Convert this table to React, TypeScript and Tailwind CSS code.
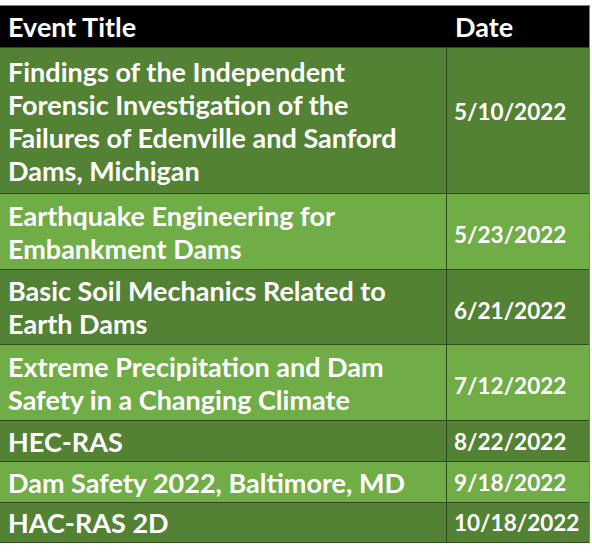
import React from 'react';

interface EventRow {
  title: string[];
  date: string;
  h: string;
  light: boolean;
  dateClass?: string;
}

const rows: EventRow[] = [
  {
    title: [
      'Findings of the Independent',
      'Forensic Investigation of the',
      'Failures of Edenville and Sanford',
      'Dams, Michigan',
    ],
    date: '5/10/2022',
    h: 'h-[146px]',
    light: false,
    dateClass: 'pb-[18px]',
  },
  { title: ['Earthquake Engineering for', 'Embankment Dams'], date: '5/23/2022', h: 'h-[76px]', light: true, dateClass: 'pt-[6px]' },
  { title: ['Basic Soil Mechanics Related to', 'Earth Dams'], date: '6/21/2022', h: 'h-[75px]', light: false, dateClass: 'pt-[6px]' },
  { title: ['Extreme Precipitation and Dam', 'Safety in a Changing Climate'], date: '7/12/2022', h: 'h-[76px]', light: true, dateClass: 'pt-[6px]' },
  { title: ['HEC-RAS'], date: '8/22/2022', h: 'h-[41px]', light: false },
  { title: ['Dam Safety 2022, Baltimore, MD'], date: '9/18/2022', h: 'h-[41px]', light: true },
  { title: ['HAC-RAS 2D'], date: '10/18/2022', h: 'h-[40px]', light: false },
];

export default function App() {
  return (
    <div className="w-[592px] h-[557px] bg-white pt-[5px] font-['Lato',sans-serif] font-bold text-white text-[27px] leading-[33px]">
      <div className="w-[590px] border-t border-r border-[#7f7f7f]">
        {/* header */}
        <div className="flex h-[41px] bg-black">
          <div className="w-[447px] shrink-0 pl-[8px] flex items-center">Event Title</div>
          <div className="flex-1 pl-[8px] flex items-center">Date</div>
        </div>
        {rows.map((r, i) => (
          <div
            key={i}
            className={`flex border-t border-[#2f4a1f] ${r.h} ${r.light ? 'bg-[#70ad47]' : 'bg-[#548235]'}`}
          >
            <div className="w-[447px] shrink-0 pl-[8px] flex flex-col justify-center border-r border-[#2f4a1f]">
              {r.title.map((t) => (
                <div key={t}>{t}</div>
              ))}
            </div>
            <div className={`flex-1 pl-[7px] flex items-center text-[22.5px] ${r.dateClass ?? ''}`}>{r.date}</div>
          </div>
        ))}
        <div className="border-t border-[#2f4a1f]" />
      </div>
    </div>
  );
}
